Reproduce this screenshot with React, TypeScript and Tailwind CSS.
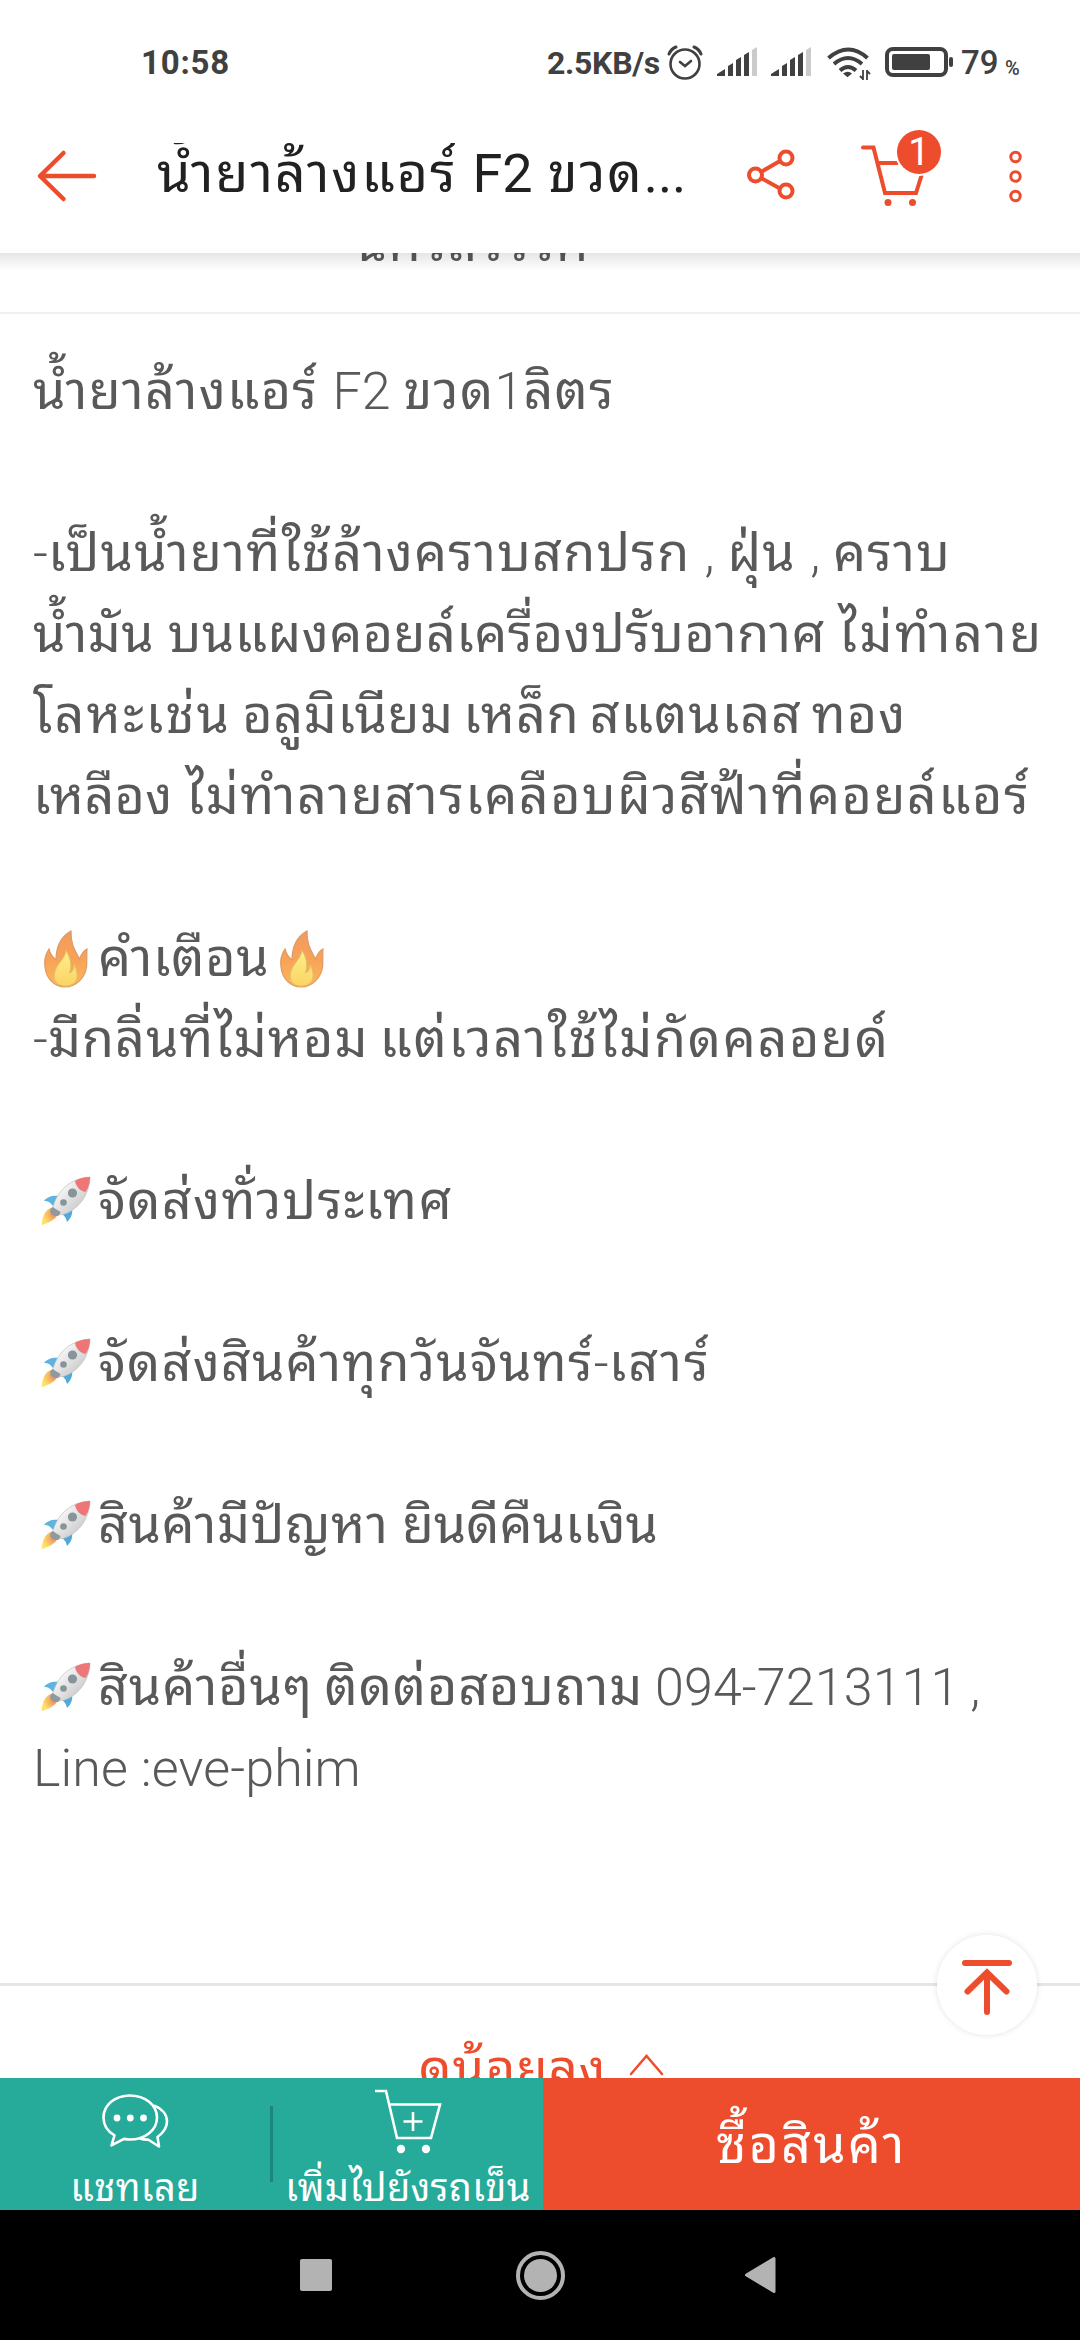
type Part = [text: string, className: string]

// each line is a list of runs with their own tracking
const DESCRIPTION: Part[][] = [
  [['น้ำยาล้างแอร์ F2 ขวด1ลิตร', 'tracking-[1.3px]']],
  [],
  [['-เป็นน้ำยาที่ใช้ล้างคราบสกปรก , ฝุ่น , คราบ', 'tracking-[1.25px]']],
  [['น้ำมัน บนแผงคอยล์เครื่องปรับอากาศ ', 'tracking-[0.5px]'], ['ไม่ทำลาย', 'tracking-[2.6px]']],
  [['โลหะเช่น ', 'tracking-[2.2px] [word-spacing:-4px]'], ['อลูมิเนียม ', 'tracking-[0.6px] [word-spacing:-4px]'], ['เหล็ก สแตนเลส ทอง', 'tracking-[1px] [word-spacing:-4px]']],
  [['เหลือง ', 'tracking-[0.3px]'], ['ไม่ทำลายสารเคลือบผิวสีฟ้าที่คอยล์แอร์', 'tracking-[1.5px]']],
  [],
  [['🔥คำเตือน🔥', 'tracking-[0.7px]']],
  [['-มีกลิ่นที่ไม่หอม ', 'tracking-[1px] [word-spacing:-3px]'], ['แต่เวลาใช้ไม่กัดคลอยด์', 'tracking-[1.7px]']],
  [],
  [['🚀จัดส่งทั่วประเทศ', 'tracking-[1.35px]']],
  [],
  [['🚀จัดส่งสินค้าทุกวันจันทร์', 'tracking-[1.2px]'], ['-เสาร์', 'tracking-[2px]']],
  [],
  [['🚀สินค้ามีปัญหา ', 'tracking-[0.6px]'], ['ยินดีคืนเเงิน', 'tracking-[0px]']],
  [],
  [['🚀สินค้าอื่นๆ ติดต่อสอบถาม 094-7213111 ,', 'tracking-[0.9px] [word-spacing:-2px]']],
  [['Line :eve-phim', '']],
]

function FireIcon() {
  return (
    <svg className="mr-[3px] inline-block h-[66px] w-[62px] align-[-12px]" viewBox="33 922 62 66">
      <defs>
        <linearGradient id="flame" x1="0" y1="0" x2="0" y2="1">
          <stop offset="0" stopColor="#f39a5f" />
          <stop offset="0.5" stopColor="#f8a258" />
          <stop offset="1" stopColor="#fcb75b" />
        </linearGradient>
        <linearGradient id="core" x1="0" y1="0" x2="0" y2="1">
          <stop offset="0" stopColor="#fdf08c" />
          <stop offset="1" stopColor="#fcd363" />
        </linearGradient>
      </defs>
      <path d="M71 931c-9 5-15 15-15 29-4-3-6-7-7-11-4 6-5 11-4 18 1 11 9 20 20 20s20-9 21.500-20c.7-7 0-13 .5-18-4 2-6 6-7.500 10-4-8-9-14-8.500-28z" fill="url(#flame)" stroke="#dd9a63" strokeWidth="1.2" />
      <path d="M65.500 950c1 8-9 13-11 23-1.500 8 3 13 11 13s12.500-5 11.500-13c-.4-3-2-6-2.500-9-.5 5-2 8-5 9 3-9 0-18-4-23z" fill="url(#core)" stroke="#e2c165" strokeWidth="1" />
    </svg>
  )
}

function RocketIcon() {
  return (
    <svg className="mr-[3px] inline-block h-[66px] w-[62px] align-[-12px]" viewBox="33 1165 62 66">
      <defs>
        <linearGradient id="hull" x1="0" y1="0" x2="1" y2="1">
          <stop offset="0.3" stopColor="#f3f3f3" />
          <stop offset="0.8" stopColor="#c9c9c9" />
        </linearGradient>
        <radialGradient id="exhaust" cx="0.75" cy="0.35" r="0.7">
          <stop offset="0" stopColor="#e9826a" />
          <stop offset="0.5" stopColor="#f7b95f" />
          <stop offset="1" stopColor="#fde26c" />
        </radialGradient>
      </defs>
      <path d="M50.500 1208c-6 3-8 8-9 17 7-2 14-5 16.500-11z" fill="url(#exhaust)" />
      <path d="M60 1196c-8-1-13 1-16 5 4 0 6 1 9 5z" fill="#5fb3e0" />
      <path d="M72 1208c1 6-1 10-5 14-1-5-3-7-7-9z" fill="#4fa9da" />
      <path d="M53 1207c4-14 14-28 37-30-1 20-13 34-29 38z" fill="url(#hull)" stroke="#c4c4c4" strokeWidth="0.8" />
      <path d="M52.500 1207c-3 2-3 5-1 7s6 3 8 1l1-3z" fill="#90999d" />
      <path d="M75 1181c4-2.500 9-4 15-4 0 5-1 10-4.500 15-5-1-9.500-5-10.500-11z" fill="#ef7676" />
      <circle cx="72.500" cy="1193" r="4.600" fill="#87959b" />
      <circle cx="63.500" cy="1202.500" r="3.300" fill="#87959b" />
    </svg>
  )
}

// Thai is set in regular weight, latin runs and digits in light
function Run({ text }: { text: string }) {
  return (
    <>
      {text.split(/(🔥|🚀|[A-Za-z0-9,:-][A-Za-z0-9 ,:-]*)/u).map((part, i) => {
        if (part === '🔥') return <FireIcon key={i} />
        if (part === '🚀') return <RocketIcon key={i} />
        if (i % 2 === 1) return <span key={i} className="font-light tracking-[0.1px]">{part}</span>
        return part
      })}
    </>
  )
}

function SignalIcon() {
  return (
    <svg className="h-[32px] w-[42px]" viewBox="715 46 42 32" fill="#404040">
      <path d="M716 74l8-5v7h-8zM727 66l5-3v13h-5zM735 60l5-3v19h-5zM743 55l5-3v24h-5z" />
      <path d="M751 50l5-3v29h-5z" fill="#cbcbcb" />
    </svg>
  )
}

function StatusBar() {
  return (
    <div className="flex h-[123px] items-start pt-[44px] text-[#404040]">
      <span className="ml-[141px] w-[406px] text-[33px] leading-[38px] font-bold tracking-[0.8px]">10:58</span>
      <span className="w-[119px] text-[32px] leading-[38px] font-bold tracking-[-0.3px]">2.5KB/s</span>
      <svg className="h-[38px] w-[38px]" viewBox="666 44 38 38" fill="none" stroke="#404040" strokeWidth="2.6" strokeLinecap="round">
        <circle cx="685" cy="64" r="14.5" />
        <path d="M680 62l5 4 6-5" />
        <path d="M669 54q2-5 7-7M701 54q-2-5-7-7" strokeWidth="3" />
      </svg>
      <div className="ml-[12px] flex gap-[12px] pt-[2px]">
        <SignalIcon />
        <SignalIcon />
      </div>
      <svg className="ml-[14px] h-[38px] w-[46px]" viewBox="825 44 46 38" fill="none" stroke="#404040" strokeWidth="4">
        <path d="M827.500 58q20-17 39 0M833 64q14-12 28 0M839 70.500q8-7 16 0" />
        <path d="M842 73.500q5-3.500 9 0l-4.500 3.700z" fill="#404040" stroke="none" />
        <path d="M862 70v10M866 70v10M859 76l3 3M869 74l-3-3" strokeWidth="1.800" />
      </svg>
      <svg className="ml-[12px] h-[38px] w-[72px]" viewBox="883 44 72 38">
        <rect x="886" y="49" width="59" height="26" rx="6" fill="none" stroke="#404040" strokeWidth="4" />
        <rect x="891" y="54" width="38" height="16" rx="2" fill="#404040" />
        <rect x="948" y="57" width="4" height="10" rx="2" fill="#404040" />
      </svg>
      <span className="ml-[5px] w-[44px] text-[33px] leading-[38px] font-medium">79</span>
      <span className="text-[20px] leading-[48px] font-medium">%</span>
    </div>
  )
}

function Header() {
  return (
    <div className="flex h-[130px] items-start">
      <svg className="mt-[23px] ml-[36px] h-[60px] w-[64px]" viewBox="36 146 64 60" fill="none" stroke="#ee4d2d" strokeWidth="4.500" strokeLinecap="round" strokeLinejoin="round">
        <path d="M94 176H40L63.500 153M40 176l23.500 23" />
      </svg>
      <h1 className="mt-[20px] ml-[57px] h-[80px] w-[540px] overflow-hidden text-[54px] leading-[61px] tracking-[1.8px] whitespace-nowrap text-[#212121]">
        น้ำยาล้างแอร์ <span className="tracking-normal">F2</span> ขวด<span className="tracking-normal">...</span>
      </h1>
      <svg className="mt-[23px] ml-[48px] h-[60px] w-[54px]" viewBox="744 146 54 60" fill="none" stroke="#ee4d2d" strokeWidth="4">
        <circle cx="754.500" cy="175" r="6.500" />
        <circle cx="785" cy="158" r="6.500" />
        <circle cx="785" cy="191" r="6.500" />
        <path d="M760 172l19-11M760 178l19 10.500" />
      </svg>
      <div className="relative ml-[60px] h-[100px] w-[88px]">
        <svg className="h-[100px] w-[88px]" viewBox="858 123 88 100" fill="none" stroke="#ee4d2d" strokeWidth="4" strokeLinecap="round">
          <path d="M862 147.500h10.500L884 193h31l5.500-17.500M877 163h19" />
          <circle cx="887" cy="202.500" r="3.500" fill="#ee4d2d" stroke="none" />
          <circle cx="911.500" cy="202.500" r="3.500" fill="#ee4d2d" stroke="none" />
        </svg>
        <span className="absolute top-[7px] left-[38px] flex h-[44px] w-[44px] items-center justify-center rounded-full bg-[#ee4d2d] text-[38px] leading-none text-white ring-2 ring-white">
          1
        </span>
      </div>
      <svg className="mt-[23px] ml-[58px] h-[60px] w-[22px]" viewBox="1004 146 22 60" fill="none" stroke="#ee4d2d" strokeWidth="3">
        <circle cx="1014.500" cy="157" r="4.700" />
        <circle cx="1014.500" cy="176.500" r="4.700" />
        <circle cx="1014.500" cy="196" r="4.700" />
      </svg>
    </div>
  )
}

function BottomBar() {
  return (
    <div className="flex h-[132px] text-white">
      <div className="flex w-[543px] items-center bg-[#26aa99]">
        <div className="flex h-full w-[270px] flex-col items-center">
          <svg className="mt-[12px] h-[60px] w-[70px]" viewBox="100 2090 70 60" fill="none" stroke="white" strokeWidth="2.600" strokeLinejoin="round">
            <path d="M130 2095.500c15 0 27 9.500 27 22s-12 22-27 22c-2 0-4-.3-6-.6l-12.500 6.500 3-10c-7-4-11-10.500-11-17.900 0-12.500 11.500-22 26.500-22z" />
            <path d="M154 2105.500c8 3 13 9 13 16 0 6-4 11.500-9.500 15.500l1.500 9.500-11-7q-5 .5-9-1.500" />
            <g fill="white" stroke="none">
              <circle cx="117" cy="2118" r="3.400" />
              <circle cx="130.300" cy="2118" r="3.400" />
              <circle cx="143.500" cy="2118" r="3.400" />
            </g>
          </svg>
          <span className="mt-[16px] text-[38px] leading-[44px] tracking-[0.3px] whitespace-nowrap">แชทเลย</span>
        </div>
        <div className="h-[76px] w-[3px] bg-[#1b877a]" />
        <div className="flex h-full w-[270px] flex-col items-center">
          <svg className="mt-[8px] h-[68px] w-[70px]" viewBox="373 2086 70 68" fill="none" stroke="white" strokeWidth="2.600">
            <path d="M375 2091h11l11 47h34l9-33.500h-50" />
            <path d="M413 2112v19M403.500 2121.500h19" />
            <circle cx="401" cy="2149" r="4.200" fill="white" stroke="none" />
            <circle cx="426" cy="2149" r="4.200" fill="white" stroke="none" />
          </svg>
          <span className="mt-[12px] text-[38px] leading-[44px] tracking-[0.3px] whitespace-nowrap">เพิ่มไปยังรถเข็น</span>
        </div>
      </div>
      <div className="flex-1 bg-[#ee4d2d] pt-[37px] text-center text-[52px] leading-[61px] tracking-[2.200px]">ซื้อสินค้า</div>
    </div>
  )
}

function NavBar() {
  return (
    <div className="flex h-[130px] items-center bg-black">
      <div className="ml-[300px] h-[32px] w-[32px] rounded-[2px] bg-[#b3b3b3]" />
      <div className="ml-[184px] flex h-[49px] w-[49px] items-center justify-center rounded-full border-4 border-[#b3b3b3]">
        <div className="h-[33px] w-[33px] shrink-0 rounded-full bg-[#b3b3b3]" />
      </div>
      <svg className="ml-[179px] h-[38px] w-[34px]" viewBox="744 2256 34 38" fill="#b3b3b3" stroke="#b3b3b3" strokeWidth="3" strokeLinejoin="round">
        <path d="M746.500 2275l27.500-16.500v33z" />
      </svg>
    </div>
  )
}

export default function App() {
  return (
    <div className="flex h-[2340px] w-[1080px] flex-col overflow-hidden bg-white font-['Roboto','Noto_Sans_Thai_Looped','Noto_Sans_Thai','Noto_Sans',sans-serif]">
      <StatusBar />
      <Header />
      <div className="relative h-[1825px] shrink-0 overflow-hidden">
        <div className="h-[59px] overflow-hidden pl-[355px]">
          <div className="-mt-[50px] text-[51px] leading-[81px] tracking-[1.5px] text-[#595959]">นครสวรรค์</div>
        </div>
        <div className="h-[2px] bg-[#f0f0f0]" />
        <div className="h-[1669px] px-[33px] pt-[37px] text-[52px] text-[#595959]">
          {DESCRIPTION.map((line, i) => (
            <p key={i} className="h-[81px] leading-[81px] whitespace-nowrap">
              {line.map(([text, className]) => (
                <span key={text} className={className}>
                  <Run text={text} />
                </span>
              ))}
            </p>
          ))}
        </div>
        <div className="h-[3px] bg-[#e5e5e5]" />
        <div className="flex pt-[42px] pl-[419px] text-[51px] leading-[81px] text-[#ee4d2d]">
          <span className="w-[210px] tracking-[1px] whitespace-nowrap">ดูน้อยลง</span>
          <svg className="mt-[25px] h-[24px] w-[36px]" viewBox="629 2054 36 24" fill="none" stroke="#ee4d2d" strokeWidth="2.500" strokeLinecap="round">
            <path d="M631 2075l15.500-18 15.500 18" />
          </svg>
        </div>
        {/* header shadow over the scrolled content */}
        <div className="absolute top-0 left-0 h-[18px] w-full bg-linear-to-b from-black/10 to-transparent" />
        <div className="absolute top-[1682px] left-[937px] flex h-[100px] w-[100px] items-center justify-center rounded-full bg-white/95 shadow-[0_0_6px_rgba(0,0,0,0.12)]">
          <svg className="h-[60px] w-[56px]" viewBox="959 1955 56 60" fill="none" stroke="#ee4d2d" strokeWidth="6" strokeLinecap="round">
            <path d="M965 1963h44M987 2012v-38M967.500 1991.500l19.500-19 19.500 19" />
          </svg>
        </div>
      </div>
      <BottomBar />
      <NavBar />
    </div>
  )
}
